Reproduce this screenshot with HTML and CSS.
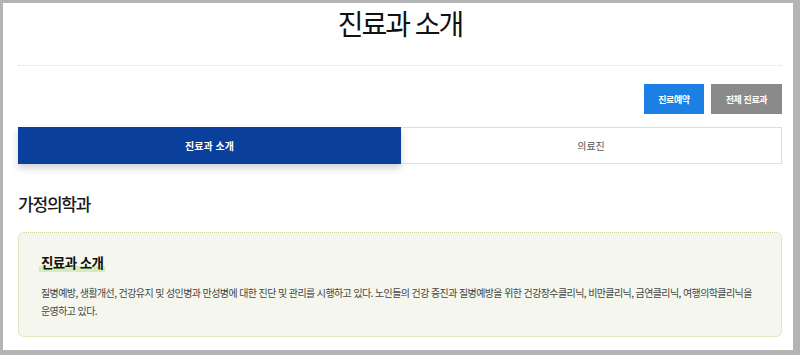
FILE: index.html
```html
<!DOCTYPE html>
<html lang="ko">
<head>
    <meta charset="UTF-8">
    <meta name="viewport" content="width=device-width, initial-scale=1.0">
    <title>진료과 소개</title>
    <link rel="stylesheet" href="styles.css">
</head>
<body>
    <div class="page">
        <h1 class="page-title">진료과 소개</h1>
        <div class="divider"></div>

        <div class="actions">
            <a class="btn btn-blue" href="#">진료예약</a>
            <a class="btn btn-gray" href="#">전체 진료과</a>
        </div>

        <div class="tabs">
            <a class="tab active" href="#">진료과 소개</a>
            <a class="tab" href="#">의료진</a>
        </div>

        <h2 class="dept-name">가정의학과</h2>

        <div class="info-box">
            <h3 class="info-title"><span>진료과 소개</span></h3>
            <p class="info-text">질병예방, 생활개선, 건강유지 및 성인병과 만성병에 대한 진단 및 관리를 시행하고 있다. 노인들의 건강 증진과 질병예방을 위한 건강장수클리닉, 비만클리닉, 금연클리닉, 여행의학클리닉을 운영하고 있다.</p>
        </div>
    </div>
</body>
</html>
```

FILE: styles.css
```css
* {
    box-sizing: border-box;
}
html, body {
    margin: 0;
    height: 355px;
    overflow: hidden;
}
body {
    background: #b4b4b4;
    padding: 3px 7px 5px 3px;
    font-family: "Noto Sans CJK KR", "Noto Sans", sans-serif;
    color: #222;
}
.page {
    background: #fff;
    height: 347px;
    padding: 0 11px 0 15px;
}
.page-title {
    margin: 0;
    font-size: 28px;
    line-height: 40px;
    font-weight: 400;
    letter-spacing: -2px;
    text-align: center;
    color: #111;
}
.divider {
    margin-top: 22px;
    border-top: 1px dotted #dcdcdc;
}
.actions {
    display: flex;
    justify-content: flex-end;
    gap: 7px;
    margin-top: 18px;
}
.btn {
    display: flex;
    align-items: center;
    justify-content: center;
    height: 30px;
    color: #fff;
    font-size: 9px;
    font-weight: 700;
    letter-spacing: -0.4px;
    text-decoration: none;
}
.btn-blue {
    width: 60px;
    background: #1b7fe3;
}
.btn-gray {
    width: 71px;
    background: #8a8a8a;
}
.tabs {
    display: grid;
    grid-template-columns: 383px 1fr;
    margin-top: 13px;
    height: 37px;
}
.tab {
    display: flex;
    align-items: center;
    justify-content: center;
    font-size: 10px;
    color: #555;
    text-decoration: none;
    border: 1px solid #dedede;
    border-left: none;
}
.tab.active {
    background: #0a3f9c;
    color: #fff;
    font-weight: 700;
    border: none;
    box-shadow: 0 4px 7px rgba(0, 0, 0, 0.18);
}
.dept-name {
    margin: 28px 0 0;
    font-size: 17px;
    line-height: 24px;
    font-weight: 500;
    letter-spacing: -1.2px;
    color: #1a1a1a;
}
.info-box {
    margin-top: 16px;
    height: 105px;
    padding: 19px 22px 16px 22px;
    background: #f5f7ee;
    border: 1px dotted #cdd49c;
    border-radius: 6px;
}
.info-title {
    margin: 0;
    font-size: 13.5px;
    line-height: 20px;
    font-weight: 700;
    letter-spacing: -0.6px;
    color: #111;
}
.info-title span {
    display: inline-block;
    margin-left: -2px;
    padding: 0 2px;
    background: linear-gradient(transparent 72%, #d6ebbd 72%);
}
.info-text {
    margin: 12px 0 0;
    font-size: 10px;
    line-height: 18px;
    letter-spacing: -0.6px;
    word-break: keep-all;
    color: #444;
}
```
